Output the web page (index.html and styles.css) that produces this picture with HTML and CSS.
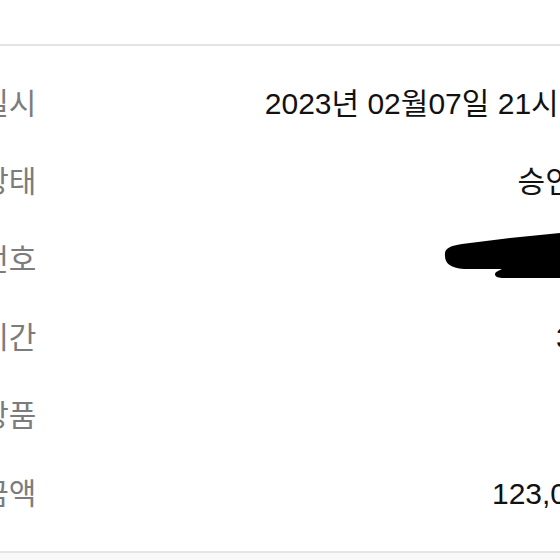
FILE: index.html
```html
<!DOCTYPE html>
<html lang="ko">

<head>
    <meta charset="UTF-8">
    <meta name="viewport" content="width=device-width, initial-scale=1.0">
    <title>결제 내역</title>
    <link rel="stylesheet" href="styles.css">
</head>

<body>
    <div class="sheet">
        <div class="top"></div>
        <div class="rows">
            <div class="row">
                <span class="label">결제일시</span>
                <span class="value">2023년 02월07일 21시 30분</span>
            </div>
            <div class="row">
                <span class="label">결제상태</span>
                <span class="value">승인완료</span>
            </div>
            <div class="row">
                <span class="label">승인번호</span>
                <span class="value"></span>
            </div>
            <div class="row">
                <span class="label">이용기간</span>
                <span class="value">3개월</span>
            </div>
            <div class="row">
                <span class="label">결제상품</span>
                <span class="value"></span>
            </div>
            <div class="row">
                <span class="label">결제금액</span>
                <span class="value">123,000원</span>
            </div>
        </div>
        <div class="bottom"></div>

        <!-- 가림 처리 -->
        <svg class="scribble" width="120" height="52" viewBox="0 0 120 52">
            <path d="M5 28 C4 20 10 18 22 16 L70 10 L120 5 L120 50 L62 50 C54 50 53 45 58 43 L62 41 L24 41 C10 40 5 35 5 28 Z" fill="#000" />
        </svg>
    </div>
</body>

</html>
```

FILE: styles.css
```css
* {
    box-sizing: border-box;
}

html,
body {
    height: 100%;
}

body {
    margin: 0;
    background-color: #fff;
    overflow: hidden;
    font-family: 'Liberation Sans', 'Noto Sans CJK KR', sans-serif;
}

.sheet {
    position: relative;
    height: 100%;
}

.top {
    height: 46px;
    border-bottom: 2px solid #e4e4e4;
}

.rows {
    margin-left: -74px;
    width: 702px;
    padding: 19px 0 18px;
}

.row {
    display: flex;
    justify-content: space-between;
    align-items: center;
    height: 78px;
    font-size: 30px;
    line-height: 78px;
    white-space: nowrap;
}

.label {
    color: #7c7c7c;
}

.value {
    color: #111;
}

.bottom {
    border-top: 2px solid #e4e4e4;
    height: 12px;
    background-color: #f8f8f8;
}

.scribble {
    position: absolute;
    left: 440px;
    top: 228px;
}
```
